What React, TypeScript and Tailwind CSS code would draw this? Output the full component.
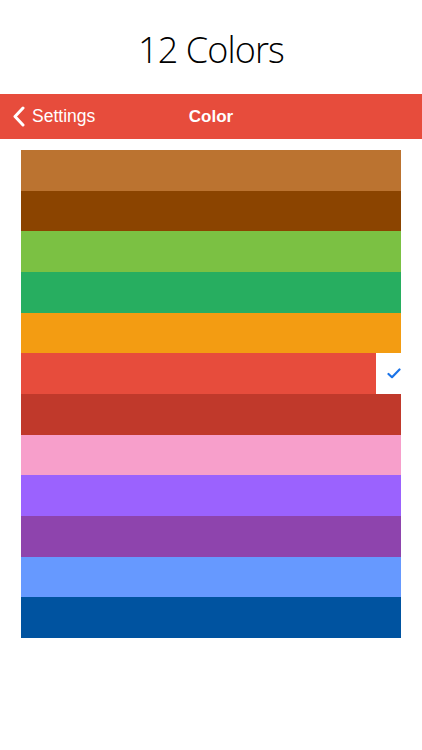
import React from "react";

const colors = [
  "#bb7330",
  "#8b4400",
  "#7bc143",
  "#27ae60",
  "#f39c12",
  "#e74c3c",
  "#c0392b",
  "#f79fcb",
  "#9b62fe",
  "#8e44ad",
  "#6699ff",
  "#0053a0",
];

export default function App() {
  return (
    <div className="w-[422px] h-[750px] bg-white relative overflow-hidden" style={{ fontFamily: "'Liberation Sans', Arial, sans-serif" }}>
      <div className="h-[94px] flex items-center justify-center pt-[5px]">
        <span className="text-[36px] font-light text-black tracking-tight" style={{ fontFamily: "'Open Sans', sans-serif" }}>12 Colors</span>
      </div>
      <div className="h-[45px] bg-[#e74c3c] relative flex items-center justify-center">
        <div className="absolute left-[12px] top-0 h-full flex items-center gap-[7px]">
          <svg width="13" height="21" viewBox="0 0 13 21">
            <path d="M11 2 L3 10.5 L11 19" fill="none" stroke="white" strokeWidth="3" strokeLinecap="round" strokeLinejoin="round" />
          </svg>
          <span className="text-white text-[17.5px]">Settings</span>
        </div>
        <span className="text-white text-[17px] font-bold">Color</span>
      </div>
      <div className="mt-[11px] mx-[21px] h-[488px] flex flex-col">
        {colors.map((c, i) => (
          <div key={i} className="flex-1 flex">
            <div className="h-full" style={{ backgroundColor: c, width: i === 5 ? 355 : "100%" }} />
            {i === 5 && (
              <div className="flex-1 bg-white flex items-center justify-center">
                <svg width="14" height="11" viewBox="0 0 14 11" className="ml-[10px]">
                  <path d="M1.5 6 L5 9.2 L12.5 1.5" fill="none" stroke="#1a73e8" strokeWidth="2.2" strokeLinecap="round" strokeLinejoin="round" />
                </svg>
              </div>
            )}
          </div>
        ))}
      </div>
    </div>
  );
}
